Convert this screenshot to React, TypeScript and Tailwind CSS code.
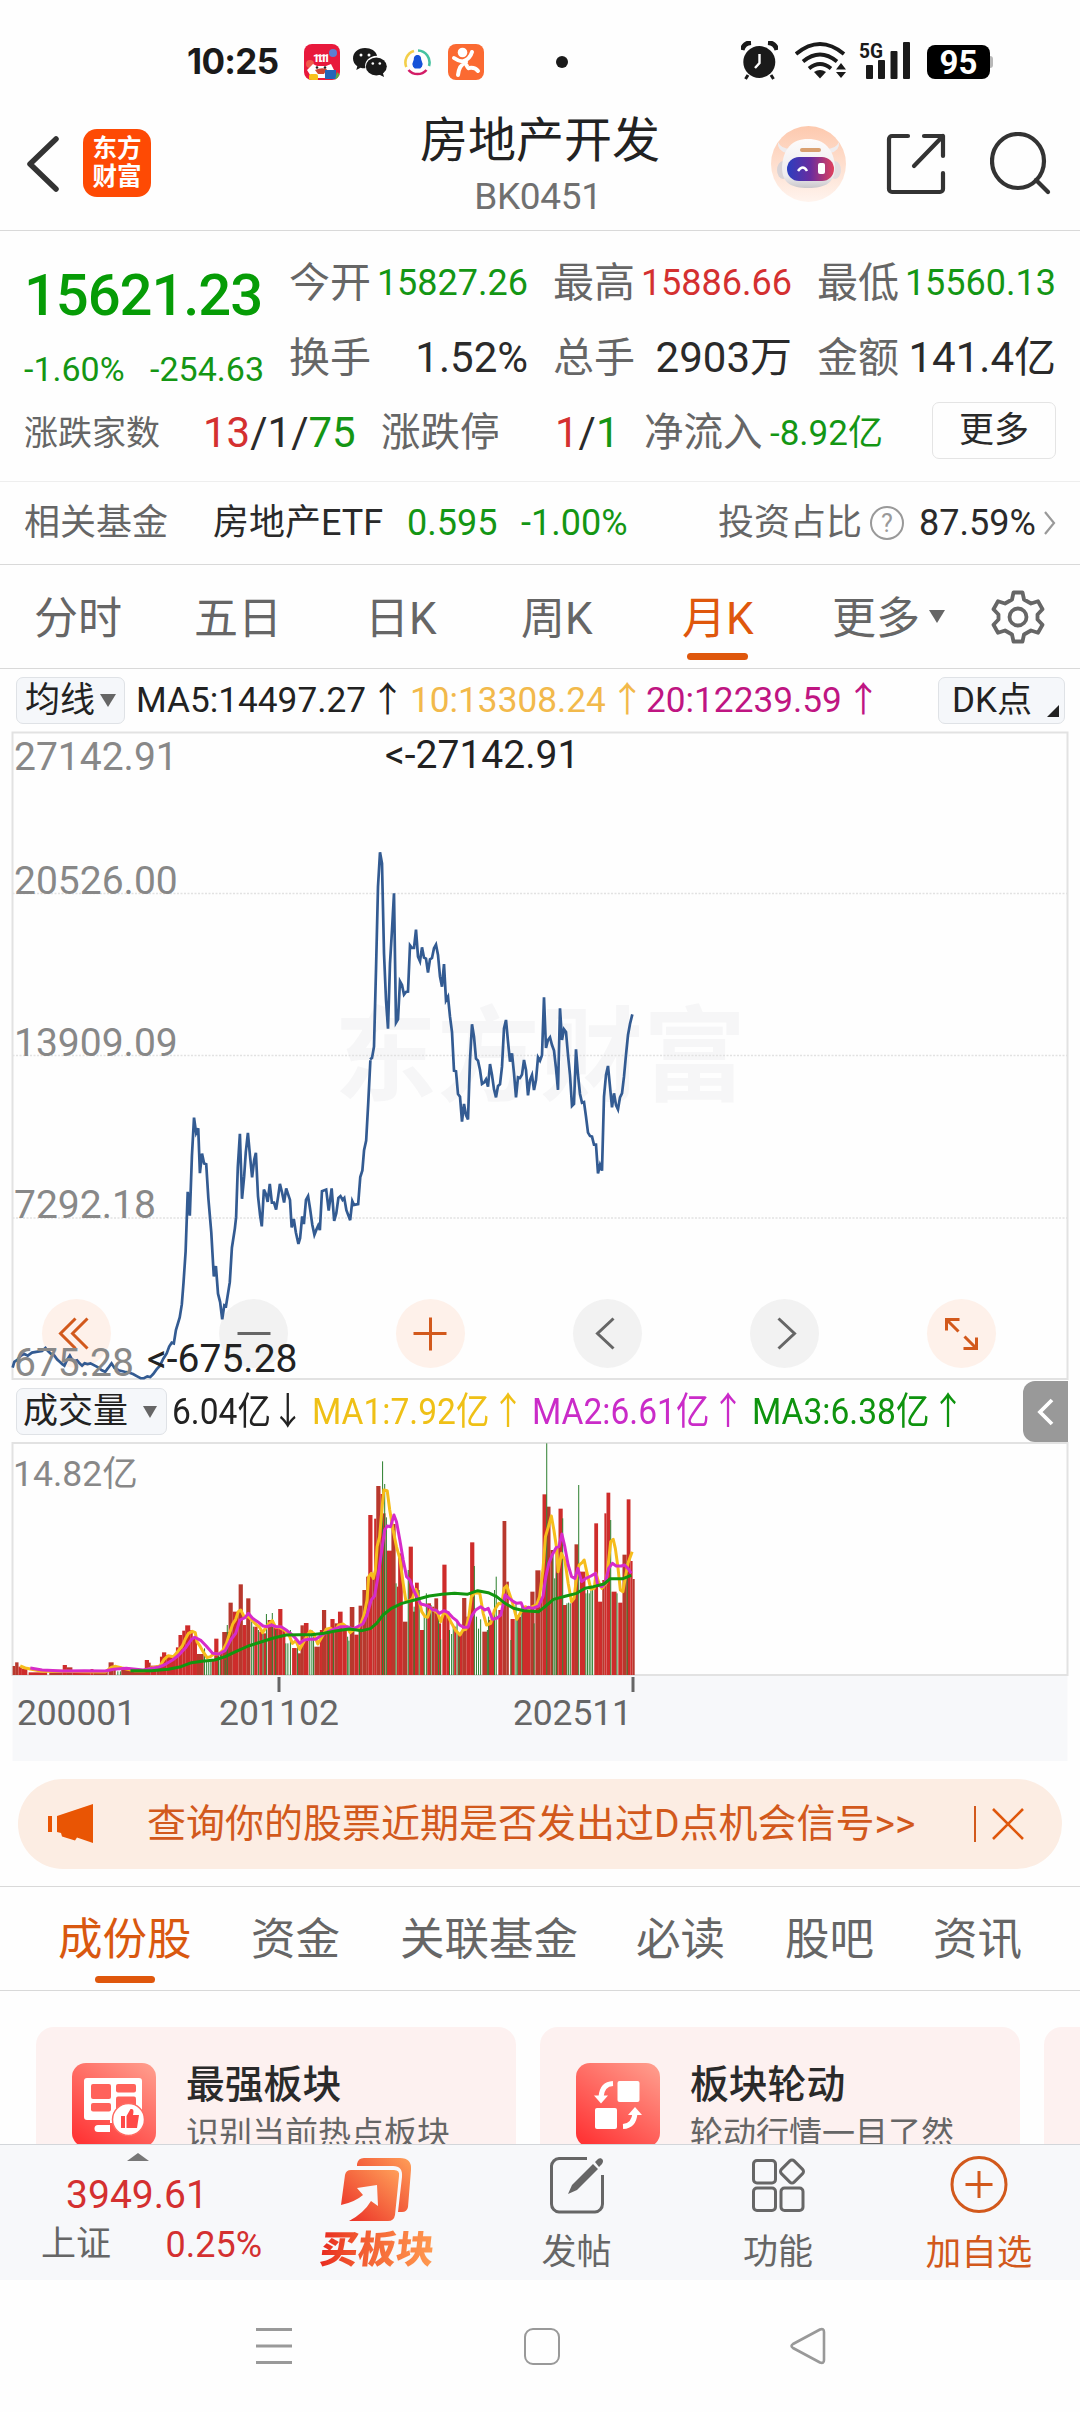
import React from "react";

type Bar = [number, number, number];

const PRICE_A =
  "30,1483 34,1468 42,1462 50,1452 57,1447 66,1452 76,1444 86,1442 100,1440 108,1432 114,1440 121,1447 128,1450 136,1462 142,1468 148,1474 153,1478 159,1464 166,1452 171,1462 177,1466 183,1464 189,1472 195,1478 201,1472 208,1474 215,1472 222,1476 232,1482 242,1490 250,1494 257,1484 265,1472 272,1484 282,1490 296,1494 306,1496 316,1500 326,1506 334,1511 342,1511 350,1506 357,1508 364,1500 372,1488 380,1478 388,1460 396,1446 402,1428 408,1418 413,1420 418,1385 427,1352 432,1318 436,1262 441,1180 446,1024 451,1086 456,930 461,830 466,870 471,858 475,975 480,924 485,950 490,952 495,1040 502,1130 508,1245 513,1218 518,1290 523,1312 528,1357 533,1320 537,1322 546,1260 551,1170 558,1120 561,1090 565,960 570,872 575,1042 580,985 584,920 589,870 594,930 599,986 604,940 608,922 613,1035 618,1085 622,1114 627,1018 632,1030 636,1050 641,1003 646,1052 651,1052 656,1070 661,1035 665,1003 670,1025 675,1052 680,1015 685,1032 689,1045 693,1117 698,1095 703,1130 709,1160 713,1145 718,1088 722,1108 727,1045 732,1035 737,1070 742,1110 747,1136 752,1122 756,1112 760,1124 765,1022 775,1018 781,1073 788,1015 794,1100 799,1080 804,1040 809,1035 814,1045 818,1040 823,1072 832,1098 837,1048 841,1058 851,1056 856,985 861,968 865,915 870,890 875,790 880,680";
const PRICE_B =
  "120,718 126,714 132,680 138,450 144,200 150,97 156,130 162,400 168,540 174,626 180,430 186,330 192,220 198,608 204,598 210,484 216,495 222,524 228,516 234,515 240,376 246,384 252,384 258,329 264,410 270,424 276,382 282,413 288,416 294,458 300,418 306,414 312,385 318,374 324,405 330,470 336,500 342,432 348,541 354,530 360,590 366,636 372,752 378,754 384,822 390,830 396,905 402,852 408,885 414,898 420,720 426,613 432,650 438,716 444,722 450,750 456,792 462,788 468,778 474,800 480,732 486,765 492,808 498,832 504,798 510,793 516,740 522,625 528,600 534,665 540,725 546,700 552,760 558,832 564,772 570,774 576,764 582,720 588,750 594,826 600,780 606,765 612,810 618,780 624,712 630,722 636,706 642,532 648,684 654,660 660,652 666,675 672,692 678,745 684,810 690,565 696,660 702,628 708,636 714,705 720,765 726,858 732,852 738,688 744,765 750,822 756,848 762,846 768,890 774,938 780,948 786,950 792,974 798,974 804,1060 810,1035 816,1052 822,830 828,765 834,738 840,800 846,862 852,820 858,855 864,868 870,832 876,820 882,770 888,705 894,645 900,612 907,583";

const RED: Bar[] = [
  [30, 36, 708], [36, 44, 697], [44, 52, 710], [52, 65, 716], [68, 112, 727], [117, 149, 727], [149, 159, 705], [159, 172, 712], [172, 215, 729], [215, 222, 717], [222, 256, 726], [258, 270, 697], [270, 275, 705], [288, 345, 718], [344, 354, 690], [354, 358, 698], [358, 372, 707], [372, 380, 705], [380, 386, 680], [385, 395, 667], [395, 418, 675], [418, 424, 652], [424, 433, 615], [433, 440, 602], [440, 452, 586], [452, 458, 600], [458, 468, 620], [468, 484, 672], [503, 509, 690], [509, 519, 626], [523, 528, 670], [528, 544, 606], [543, 553, 518], [553, 567, 545], [567, 577, 463], [577, 585, 585], [585, 595, 505], [604, 612, 590], [616, 624, 605], [626, 632, 610], [636, 650, 570], [650, 661, 592], [661, 671, 537], [671, 678, 600], [694, 705, 654], [708, 715, 670], [714, 722, 586], [722, 733, 579], [747, 760, 650], [760, 765, 600], [765, 775, 540], [775, 785, 600], [785, 795, 567], [795, 803, 580], [803, 814, 545], [814, 824, 595], [831, 842, 531], [842, 852, 614], [852, 861, 527], [861, 870, 480], [870, 875, 440], [875, 885, 255], [885, 889, 440], [889, 894, 266], [894, 904, 168], [904, 910, 192], [910, 916, 250], [919, 932, 362], [930, 940, 282], [943, 947, 470], [946, 957, 370], [957, 968, 575], [971, 981, 350], [981, 986, 545], [986, 995, 458], [998, 1008, 600], [1015, 1024, 520], [1026, 1032, 530], [1032, 1041, 505], [1043, 1048, 580], [1051, 1061, 404], [1061, 1068, 545], [1079, 1084, 590], [1088, 1098, 612], [1098, 1108, 504], [1108, 1117, 560], [1117, 1127, 337], [1146, 1158, 605], [1160, 1176, 570], [1184, 1194, 540], [1194, 1203, 273], [1203, 1209, 455], [1213, 1223, 567], [1230, 1238, 560], [1240, 1260, 540], [1260, 1270, 485], [1272, 1284, 421], [1284, 1289, 500], [1289, 1299, 193], [1299, 1308, 230], [1308, 1314, 360], [1320, 1327, 348], [1327, 1337, 236], [1337, 1347, 525], [1358, 1366, 510], [1365, 1374, 343], [1378, 1391, 425], [1412, 1421, 280], [1421, 1431, 515], [1431, 1436, 450], [1436, 1441, 250], [1441, 1450, 188], [1453, 1465, 485], [1469, 1479, 518], [1479, 1489, 374], [1489, 1498, 208], [1498, 1503, 393], [1503, 1508, 447],
];

const GREEN: [number, number][] = [
  [280, 724], [286, 724], [486, 655], [491, 690], [496, 690], [501, 688], [519, 670], [523, 668], [535, 690], [540, 585], [598, 575], [602, 590], [614, 600], [625, 600], [633, 552], [647, 549], [655, 600], [679, 640], [684, 640], [690, 600], [707, 650], [736, 610], [741, 600], [745, 612], [780, 610], [792, 600], [826, 620], [829, 632], [854, 600], [909, 94], [914, 162], [918, 262], [941, 460], [970, 420], [984, 530], [996, 480], [1008, 560], [1013, 490], [1024, 525], [1042, 550], [1047, 628], [1068, 600], [1073, 612], [1077, 590], [1086, 570], [1091, 620], [1127, 408], [1132, 560], [1137, 596], [1142, 568], [1158, 600], [1161, 560], [1175, 480], [1179, 440], [1214, 630], [1226, 520], [1229, 568], [1240, 520], [1269, 580], [1299, 40], [1314, 360], [1318, 445], [1322, 430], [1337, 265], [1347, 520], [1351, 518], [1355, 520], [1375, 165], [1392, 490], [1396, 480], [1400, 490], [1404, 482], [1408, 480], [1451, 270], [1466, 490], [1490, 395],
];

const MA1 =
  "48,708 60,714 75,718 100,724 150,724 200,725 250,726 265,712 275,709 290,714 320,722 345,722 360,714 380,708 390,688 400,677 412,680 420,668 433,648 440,628 448,610 457,604 464,608 468,635 476,650 484,668 492,683 500,680 508,672 520,672 530,660 538,640 546,608 553,582 560,568 566,545 572,540 580,560 590,560 598,570 607,582 616,590 624,608 632,592 640,580 647,572 655,592 663,592 675,600 685,610 695,640 703,632 712,658 720,640 728,620 737,603 745,610 755,642 765,620 775,598 785,595 795,602 805,585 815,582 823,590 832,608 842,597 850,598 857,582 865,555 872,510 876,440 882,430 887,445 892,420 896,350 902,320 908,230 912,180 920,182 926,240 934,300 942,350 950,385 958,460 964,510 972,515 980,505 988,478 994,500 1002,545 1010,560 1016,562 1024,535 1032,542 1040,550 1047,575 1055,545 1063,555 1073,580 1083,602 1093,615 1100,600 1107,598 1114,560 1120,500 1128,488 1140,490 1148,550 1156,585 1166,580 1175,540 1185,520 1192,522 1198,475 1204,467 1210,490 1218,520 1228,568 1238,545 1248,530 1256,535 1265,530 1275,525 1282,500 1290,420 1296,320 1303,290 1310,258 1316,300 1322,350 1326,425 1334,370 1342,390 1350,460 1358,515 1364,505 1370,440 1376,405 1383,398 1388,390 1394,425 1404,478 1412,475 1416,430 1422,455 1430,475 1440,460 1445,405 1451,335 1457,328 1462,355 1468,410 1474,480 1480,485 1486,440 1492,400 1502,365";
const MA2 =
  "72,714 100,720 150,723 200,722 250,723 270,718 300,715 340,720 375,712 390,705 410,690 425,675 440,655 455,628 463,622 478,632 490,648 505,670 520,672 535,662 548,630 560,610 570,570 582,563 590,550 600,565 612,575 625,588 635,590 645,585 655,590 668,590 680,600 690,610 700,622 712,640 722,630 735,628 750,628 765,615 780,605 795,597 810,590 825,590 838,597 850,590 862,582 872,555 882,510 890,498 898,440 906,370 914,300 920,288 928,290 936,255 942,275 950,330 958,390 966,440 974,450 982,478 990,500 1000,522 1010,525 1020,530 1028,540 1036,540 1044,550 1055,542 1065,548 1075,562 1085,572 1092,585 1102,592 1112,592 1120,560 1130,540 1142,530 1152,540 1160,535 1170,568 1180,565 1190,555 1200,495 1210,505 1220,515 1228,520 1238,518 1245,540 1255,532 1265,535 1280,528 1290,500 1297,440 1304,400 1312,375 1322,352 1328,350 1335,312 1342,350 1350,405 1358,440 1366,445 1373,415 1382,455 1392,445 1404,438 1415,430 1420,465 1430,470 1438,460 1446,415 1455,400 1464,408 1476,408 1484,405 1492,415 1500,430";
const MA3 =
  "310,722 360,722 400,718 430,710 455,698 480,694 510,690 535,680 560,665 590,648 620,636 650,624 680,615 710,614 740,614 770,610 800,602 830,597 860,602 880,596 895,580 910,555 930,535 955,520 985,510 1020,498 1050,493 1080,490 1110,493 1135,482 1160,488 1180,500 1200,520 1220,535 1245,542 1280,545 1295,530 1315,508 1345,498 1370,490 1390,475 1410,470 1435,462 1450,446 1480,446 1500,436";

function StatusBar() {
  return (
    <div className="flex h-[100px] shrink-0 items-start pt-[41px] text-[#1a1a1a]">
      <span className="ml-[187px] mt-px w-[100px] font-['Inter'] text-[35px] leading-[38px] font-bold tracking-[-0.700px]">10:25</span>
      <svg className="ml-[17px] mt-[3px]" width="36" height="36" viewBox="0 0 36 36">
        <defs>
          <clipPath id="shop"><rect width="36" height="36" rx="8" /></clipPath>
        </defs>
        <g clipPath="url(#shop)">
          <rect width="36" height="36" fill="#e8193c" />
          <circle cx="29" cy="9" r="4" fill="#5b7fd0" />
          <circle cx="6" cy="20" r="4" fill="#ef5a4c" />
          <path d="M3 26l6-6 4 2h9l5-2 3 6-4 8H8z" fill="#fff" />
          <path d="M11 26q6-3 12-1l-3 5h-6z" fill="#c43" />
          <circle cx="13" cy="23.500" r="1.300" fill="#222" /><circle cx="21" cy="23.500" r="1.300" fill="#222" />
          <rect x="5" y="30" width="9" height="7" rx="2" fill="#f8c11c" />
          <rect x="21" y="26" width="11" height="9" fill="#2465b8" />
          <path d="M33 28l3 3v5h-5z" fill="#57b04a" />
          <text x="9" y="18" fontSize="11" fontWeight="900" fill="#fff" fontFamily="Roboto" textLength="17">11.11</text>
        </g>
      </svg>
      <svg className="ml-[13px] mt-[7px]" width="34" height="30" viewBox="0 0 34 30">
        <path d="M12 0C5 0 0 4.700 0 10.400c0 3.300 1.700 6 4.300 7.900L3.300 22l4.200-2.300c1.500.4 3 .6 4.900.5-1.500-6 3-12.200 11.700-12.400C23 3 18 0 12 0z" fill="#1a1a1a" />
        <ellipse cx="23.300" cy="18.500" rx="10.500" ry="8.900" fill="#1a1a1a" /><path d="M25 26l6 3-1.200-4.500z" fill="#1a1a1a" />
        <g fill="#fff"><circle cx="8" cy="7" r="1.500" /><circle cx="16" cy="7" r="1.500" /><circle cx="19.800" cy="15.500" r="1.300" /><circle cx="26.800" cy="15.500" r="1.300" /></g>
      </svg>
      <svg className="ml-[17px] mt-[8px]" width="27" height="27" viewBox="0 0 27 27">
        <g fill="none" strokeWidth="2.600">
          <path d="M2.300 18A12 12 0 0 1 10 2" stroke="#f3cf4a" /><path d="M14 1.500A12 12 0 0 1 25 17" stroke="#45c2a0" /><path d="M22.500 21A12 12 0 0 1 4.500 21" stroke="#d31c66" />
        </g>
        <path d="M13.500 6c-2.800 0-3.700 2.300-3.700 4.500L8.300 15l.8 2.800 1.700 1.700h5.400l1.700-1.700.8-2.800-1.500-4.500c0-2.200-.9-4.500-3.700-4.500z" fill="#1552d8" />
      </svg>
      <svg className="ml-[17px] mt-[3px]" width="36" height="36" viewBox="0 0 36 36">
        <rect width="36" height="36" rx="8" fill="#fb6a32" />
        <circle cx="14.500" cy="8.500" r="4.800" fill="#fff" />
        <path d="M6 14q4 3 9 3.500Q22 15 24 8M10 31q1-10 8-13M17 18q3 7 4 6 6-1 9 3" stroke="#fff" strokeWidth="4" fill="none" strokeLinecap="round" />
      </svg>
      <div className="ml-[72px] mt-[15px] h-3 w-3 rounded-full bg-[#1a1a1a]" />
      <svg className="ml-[173px]" width="37" height="39" viewBox="0 0 37 39">
        <circle cx="18.300" cy="21" r="16" fill="#1a1a1a" />
        <path d="M7 34l-2.500 4M30 34l2.500 4" stroke="#1a1a1a" strokeWidth="3" />
        <path d="M1 9A10 10 0 0 1 10 1.500M36 9A10 10 0 0 0 27 1.500" stroke="#1a1a1a" strokeWidth="5" fill="none" />
        <path d="M18.500 13v9l-4.500 5" stroke="#fff" strokeWidth="2.400" fill="none" />
      </svg>
      <svg className="ml-[17px] mt-px" width="52" height="37" viewBox="0 0 52 37">
        <g fill="none" stroke="#1a1a1a" strokeWidth="3.800">
          <path d="M1 12q24-20 48 0" /><path d="M8 19.500q17-14 34 0" /><path d="M14 26.500q11-9 22 0" />
        </g>
        <path d="M19 30q6-4 12 0l-6 6.500z" fill="#1a1a1a" />
        <path d="M46 21l5 6.500H41zM46 36l5-6H41z" fill="#1a1a1a" />
      </svg>
      <svg className="ml-[12px] overflow-visible" width="54" height="39" viewBox="0 0 54 39">
        <text x="0" y="17" fontSize="21" fontWeight="700" fill="#1a1a1a" fontFamily="Roboto" textLength="24" lengthAdjust="spacingAndGlyphs">5G</text>
        <g fill="#1a1a1a"><rect x="7" y="24" width="7" height="14" rx="1" /><rect x="19" y="19" width="7" height="19" rx="1" /><rect x="31.500" y="10" width="7" height="28" rx="1" /><rect x="44" y="1" width="7" height="37" rx="1" /></g>
      </svg>
      <div className="ml-[14px] mt-[4px] flex h-[34px] w-[63px] items-center justify-center rounded-[8px] bg-black text-[33px] leading-none font-bold text-white">95</div>
      <div className="mt-[15px] h-[12px] w-[3px] rounded-r bg-[#b8b8b8]" />
    </div>
  );
}

function Header() {
  return (
    <div className="flex h-[131px] shrink-0 items-start border-b-[1.500px] border-[#d9d9d9]">
      <svg className="ml-[26px] mt-[35px]" width="34" height="58" viewBox="0 0 34 58">
        <path d="M30 4L4 29l26 25" fill="none" stroke="#333" strokeWidth="5.500" strokeLinecap="round" strokeLinejoin="round" />
      </svg>
      <div className="ml-[23px] mt-[29px] flex h-[68px] w-[68px] flex-col items-center justify-center rounded-[14px] bg-[#fe4a04] text-[24.500px] leading-[28px] font-bold text-white">
        <span>东方</span><span>财富</span>
      </div>
      <div className="ml-[239px] flex w-[300px] flex-col items-center">
        <div className="mt-[13px] text-[48px] leading-[56px] text-[#222]">房地产开发</div>
        <div className="mt-[9px] mr-[4px] text-[37px] leading-[38px] tracking-[-0.300px] text-[#707070]">BK0451</div>
      </div>
      <svg className="ml-[80px] mt-[25px]" width="77" height="78" viewBox="0 0 77 78">
        <defs>
          <linearGradient id="halo" x1="0" y1="0" x2="0" y2="1"><stop offset="0" stopColor="#fdc9ae" /><stop offset="1" stopColor="#fff4ee" /></linearGradient>
          <linearGradient id="visor" x1="0" x2="1"><stop offset="0" stopColor="#2a3fc0" /><stop offset="0.500" stopColor="#6a2c9e" /><stop offset="1" stopColor="#e0405c" /></linearGradient>
          <linearGradient id="shell" x1="0" y1="0" x2="0" y2="1"><stop offset="0" stopColor="#fdfbfb" /><stop offset="0.750" stopColor="#eeecee" /><stop offset="1" stopColor="#c9c7cb" /></linearGradient>
        </defs>
        <ellipse cx="38.500" cy="39" rx="37.500" ry="38" fill="url(#halo)" />
        <path d="M17 28q-10-2-9-11 3 7 13 7zM60 28q10-2 9-11-3 7-13 7z" fill="#efecee" />
        <ellipse cx="13" cy="45" rx="6" ry="9" fill="#d9d3d6" /><ellipse cx="65" cy="45" rx="6" ry="9" fill="#e3dcde" />
        <path d="M38 14c16 0 26 10 27 28 0 16-10 21-27 21S12 58 12 42c1-18 10-28 26-28z" fill="url(#shell)" />
        <rect x="30" y="23" width="21" height="4" rx="2" fill="#d9a070" />
        <rect x="17" y="32" width="47" height="24" rx="12" fill="url(#visor)" />
        <path d="M28 46q5-7 9 0" stroke="#fff" strokeWidth="2.500" fill="none" /><rect x="48" y="38" width="7" height="11" rx="2" fill="#fff" />
      </svg>
      <svg className="ml-[39px] mt-[33px]" width="60" height="62" viewBox="0 0 60 62">
        <path d="M22 3H6a3 3 0 0 0-3 3v50a3 3 0 0 0 3 3h48a3 3 0 0 0 3-3V40M38 3h19v20M57 3L28 33" fill="none" stroke="#333" strokeWidth="4.200" strokeLinecap="round" strokeLinejoin="round" />
      </svg>
      <svg className="ml-[44px] mt-[32px]" width="62" height="64" viewBox="0 0 62 64">
        <ellipse cx="28" cy="29" rx="26" ry="27" fill="none" stroke="#333" strokeWidth="4.200" />
        <path d="M46 48l12 12" stroke="#333" strokeWidth="4.200" strokeLinecap="round" />
      </svg>
    </div>
  );
}

function Stat({ label, value, cls }: { label: string; value: string; cls: string }) {
  return (
    <div className="flex w-[239px] items-center justify-between">
      <span className="text-[41px] text-[#666]">{label}</span>
      <span className={cls}>{value}</span>
    </div>
  );
}

function Quote() {
  const small = "text-[36px]";
  return (
    <div className="h-[251px] shrink-0 border-b-[1.500px] border-[#eee] whitespace-nowrap leading-none">
      <div className="flex h-[161px]">
        <div className="ml-[24px] w-[240px]">
          <div className="mt-[34px] text-[58px] leading-[60px] font-medium tracking-[-1.100px] text-[#069c06]">15621.23</div>
          <div className="mt-[25px] flex justify-between text-[34px] leading-[38px] text-[#149614]"><span>-1.60%</span><span>-254.63</span></div>
        </div>
        <div className="ml-[25px] mt-[20px] flex flex-col gap-[11px]">
          <div className="flex h-[64px] items-center gap-[25px]">
            <Stat label="今开" value="15827.26" cls={small + " text-[#149614]"} />
            <Stat label="最高" value="15886.66" cls={small + " text-[#d43030]"} />
            <Stat label="最低" value="15560.13" cls={small + " text-[#149614]"} />
          </div>
          <div className="flex h-[64px] items-center gap-[25px]">
            <Stat label="换手" value="1.52%" cls="text-[42px] text-[#2a2a2a]" />
            <Stat label="总手" value="2903万" cls="text-[42px] text-[#2a2a2a]" />
            <Stat label="金额" value="141.4亿" cls="text-[42px] text-[#2a2a2a]" />
          </div>
        </div>
      </div>
      <div className="flex h-[82px] items-center pl-[24px]">
        <span className="w-[179px] text-[34px] text-[#666]">涨跌家数</span>
        <span className="w-[178px] text-[42px] text-[#2a2a2a]"><b className="font-normal text-[#d43030]">13</b>/1/<b className="font-normal text-[#149614]">75</b></span>
        <span className="w-[174px] text-[39.500px] text-[#666]">涨跌停</span>
        <span className="w-[89px] text-[42px] text-[#2a2a2a]"><b className="font-normal text-[#d43030]">1</b>/<b className="font-normal text-[#149614]">1</b></span>
        <span className="w-[126px] text-[39.500px] text-[#666]">净流入</span>
        <span className="w-[162px] text-[35px] text-[#149614]">-8.92亿</span>
        <span className="relative -top-[3px] flex h-[57px] w-[124px] items-center justify-center rounded-[7px] border-[1.500px] border-[#e4e4e4] text-[35px] text-[#2a2a2a]">更多</span>
      </div>
    </div>
  );
}

function FundRow() {
  return (
    <div className="flex h-[83px] shrink-0 items-center border-b-[1.500px] border-[#d9d9d9] pl-[24px] text-[36px] leading-none whitespace-nowrap">
      <span className="w-[189px] text-[#666]">相关基金</span>
      <span className="w-[194px] text-[#2a2a2a]">房地产ETF</span>
      <span className="w-[114px] text-[#149614]">0.595</span>
      <span className="w-[197px] text-[#149614]">-1.00%</span>
      <span className="w-[152px] text-[#666]">投资占比</span>
      <span className="flex h-[34px] w-[34px] items-center justify-center rounded-full border-[2.500px] border-[#999] text-[25px] text-[#999]">?</span>
      <span className="ml-[15px] w-[123px] text-[#2a2a2a]">87.59%</span>
      <svg width="16" height="28" viewBox="0 0 16 28"><path d="M3 3l9 11-9 11" fill="none" stroke="#999" strokeWidth="2.200" /></svg>
    </div>
  );
}

function PeriodTabs() {
  return (
    <div className="flex h-[104px] shrink-0 items-center border-b-[1.500px] border-[#d9d9d9] pl-[34px] text-[44px] leading-none whitespace-nowrap text-[#666]">
      <span className="mt-[4px] w-[160px]">分时</span>
      <span className="mt-[4px] w-[171px]">五日</span>
      <span className="mt-[4px] w-[156px]">日K</span>
      <span className="mt-[4px] w-[161px]">周K</span>
      <span className="relative mt-[4px] w-[150px] text-[#df570c]">月K<i className="absolute top-[56px] left-[5px] h-[7px] w-[61px] rounded-full bg-[#df570c]" /></span>
      <span className="mt-[4px] w-[97px]">更多</span>
      <span className="h-0 w-0 border-x-[8px] border-t-[13px] border-x-transparent border-t-[#666]" />
      <svg className="ml-[46px]" width="54" height="54" viewBox="0 0 54 54">
        <path d="M22.500 2.500h9l1.500 7 7 4 7-2.300 4.500 8-5 5.300v5l5 5.300-4.500 8-7-2.300-7 4-1.500 7h-9l-1.500-7-7-4-7 2.300-4.500-8 5-5.300v-5l-5-5.300 4.500-8 7 2.300 7-4z" fill="none" stroke="#666" strokeWidth="3.800" strokeLinejoin="round" />
        <circle cx="27" cy="27" r="8.500" fill="none" stroke="#666" strokeWidth="3.800" />
      </svg>
    </div>
  );
}

function MaRow() {
  const arrow = "ml-[4px]";
  return (
    <div className="flex h-[62px] shrink-0 items-center pt-px pl-[16px] text-[35px] leading-none whitespace-nowrap">
      <span className="flex h-[47px] w-[109px] items-center rounded-[7px] border-[1.500px] border-[#dfe2e6] bg-[#f5f7fa] pl-[8px] text-[#222]">均线<i className="ml-[5px] h-0 w-0 border-x-[8px] border-t-[13px] border-x-transparent border-t-[#666]" /></span>
      <span className="ml-[11px] w-[274px] pt-px text-[35.200px] text-[#222]">MA5:14497.27<span className={arrow}>↑</span></span>
      <span className="w-[236px] pt-px text-[35.200px] text-[#f2b94b]">10:13308.24<span className={arrow}>↑</span></span>
      <span className="w-[292px] pt-px text-[35.200px] text-[#bf1582]">20:12239.59<span className={arrow}>↑</span></span>
      <span className="relative flex h-[47px] w-[127px] items-center rounded-[7px] border-[1.500px] border-[#dfe2e6] bg-[#f5f7fa] pl-[13px] text-[#222]">DK点<i className="absolute right-[5px] bottom-[6px] h-0 w-0 border-b-[12px] border-l-[12px] border-b-[#222] border-l-transparent" /></span>
    </div>
  );
}

const circles = [
  { x: 76.5, warm: true, d: "M-1 -15l-15 15 15 15M11 -15l-15 15 15 15" },
  { x: 253.5, warm: false, d: "M-16 0h33" },
  { x: 430.5, warm: true, d: "M-17 0h33M0 -16v33" },
  { x: 607.5, warm: false, d: "M6 -15l-16 15 16 15" },
  { x: 784.5, warm: false, d: "M-6 -15l16 15-16 15" },
  { x: 961.5, warm: true, d: "M-15 -3v-11h13M-14 -13L-3 -2M15 4v11h-13M14 14L3 3" },
];

function PriceChart() {
  return (
    <svg className="block shrink-0 overflow-visible" width="1080" height="650" viewBox="0 731 1080 650" fontFamily="Roboto, 'Noto Sans CJK SC', sans-serif" fontSize="39">
      <text x="334" y="1093" fontSize="103" fontWeight="700" fill="#f6f6f7">东方财富</text>
      <path d="M12.500 893.500H1067M12.500 1055.500H1067M12.500 1218H1067" stroke="#e2e2e2" strokeWidth="1.500" strokeDasharray="2 1.500" />
      <path d="M12.500 732.500H1067.500V1379H12.500Z" fill="none" stroke="#e2e2e2" strokeWidth="2" />
      {circles.map((c) => (
        <circle key={c.x} cx={c.x} cy="1333.500" r="34.500" fill={c.warm ? "#fef1ea" : "#f2f2f2"} />
      ))}
      <g fill="none" stroke="#335b92" strokeWidth="2.700">
        <polyline points={PRICE_A} transform="translate(0 800) scale(.42088 .3827)" vectorEffect="non-scaling-stroke" />
        <polyline points={PRICE_B} transform="translate(330 820) scale(.33333)" vectorEffect="non-scaling-stroke" />
      </g>
      {circles.map((c) => (
        <path key={c.x} d={c.d} transform={`translate(${c.x} 1333.5)`} fill="none" stroke={c.warm ? "#d2591c" : "#666"} strokeWidth="3" />
      ))}
      <g fill="#888">
        <text x="14" y="770">27142.91</text>
        <text x="14" y="894">20526.00</text>
        <text x="14" y="1056">13909.09</text>
        <text x="14" y="1218">7292.18</text>
        <text x="14" y="1376">675.28</text>
      </g>
      <text x="385" y="768" fill="#222">&lt;-27142.91</text>
      <text x="147" y="1371.500" fill="#222">&lt;-675.28</text>
    </svg>
  );
}

function VolumeHeader() {
  const item = "h-full origin-left scale-x-[0.895] text-[37.500px] leading-[61px]";
  const arrow = "ml-[2px]";
  return (
    <div className="flex h-[61px] shrink-0 items-center pl-[16px] leading-none whitespace-nowrap">
      <span className="flex h-[47px] w-[151px] shrink-0 items-center rounded-[7px] border-[1.500px] border-[#dfe2e6] bg-[#f5f7fa] pl-[6px] text-[35px] text-[#222]">成交量<i className="ml-[15px] h-0 w-0 border-x-[7px] border-t-[12px] border-x-transparent border-t-[#666]" /></span>
      <span className="ml-[5px] w-[140px] shrink-0"><span className={item + " block w-[157px] text-[#222]"}>6.04亿↓</span></span>
      <span className="w-[220px] shrink-0"><span className={item + " block w-[248px] text-[#efc016]"}>MA1:7.92亿<span className={arrow}>↑</span></span></span>
      <span className="w-[220px] shrink-0"><span className={item + " block w-[248px] text-[#ca2bc8]"}>MA2:6.61亿<span className={arrow}>↑</span></span></span>
      <span className="w-[271px] shrink-0"><span className={item + " block w-[248px] text-[#0e930e]"}>MA3:6.38亿<span className={arrow}>↑</span></span></span>
      <span className="flex h-[61px] w-[45px] shrink-0 items-center justify-center rounded-l-[12px] bg-[#999]">
        <svg width="18" height="28" viewBox="0 0 18 28"><path d="M15 2L3 14l12 12" fill="none" stroke="#fff" strokeWidth="3.800" /></svg>
      </span>
    </div>
  );
}

function VolumeChart() {
  return (
    <svg className="block shrink-0" width="1080" height="319" viewBox="0 1442 1080 319" fontFamily="Roboto, 'Noto Sans CJK SC', sans-serif">
      <path d="M12.500 1443H1067.500V1675H12.500Z" fill="none" stroke="#e2e2e2" strokeWidth="2" />
      <rect x="12.500" y="1676" width="1055" height="85" fill="#f7f8fa" />
      <text x="13" y="1486" fontSize="35.500" fill="#888">14.82亿</text>
      <g transform="translate(0 1430) scale(.42088 .33333)">
        {RED.map(([a, b, t]) => <rect key={a} x={a} y={t} width={b - a} height={735 - t} fill={a % 3 === 0 ? "#b8382d" : "#ce2c2b"} />)}
        {GREEN.map(([x, t]) => <rect key={x} x={x - 1.2} y={t} width="2.400" height={735 - t} fill="#2e8030" />)}
        <g fill="none" strokeLinejoin="round">
          <polyline points={MA1} stroke="#f6bd1c" strokeWidth="3" vectorEffect="non-scaling-stroke" />
          <polyline points={MA2} stroke="#d62bc9" strokeWidth="3" vectorEffect="non-scaling-stroke" />
          <polyline points={MA3} stroke="#12960f" strokeWidth="3" vectorEffect="non-scaling-stroke" />
        </g>
      </g>
      <path d="M279 1677v15M633 1677v15" stroke="#666" strokeWidth="3" />
      <g fill="#666" fontSize="35.500">
        <text x="17" y="1725" textLength="119">200001</text>
        <text x="219" y="1725" textLength="120">201102</text>
        <text x="513" y="1725" textLength="119">202511</text>
      </g>
    </svg>
  );
}

function Banner() {
  return (
    <div className="mx-[18px] mt-[18px] flex h-[90px] shrink-0 items-center rounded-full bg-[#fcede3] pl-[29px] leading-none whitespace-nowrap">
      <svg width="48" height="42" viewBox="0 0 48 42"><path d="M10 13L46 1v39L30 34.500l-2 3-13-4-1-3.500-4-1zM1 13h4v16H1z" fill="#e95504" /></svg>
      <span className="ml-[52px] w-[827px] text-[39px] text-[#d2591c]">查询你的股票近期是否发出过D点机会信号&gt;&gt;</span>
      <i className="h-[36px] w-[1.500px] bg-[#d2591c]" />
      <svg className="ml-[15px]" width="34" height="34" viewBox="0 0 34 34"><path d="M2 2l30 30M32 2L2 32" stroke="#df570c" strokeWidth="2.600" /></svg>
    </div>
  );
}

function SectionTabs() {
  return (
    <div className="mt-[17px] flex h-[105px] shrink-0 items-center border-y-[1.500px] border-[#d9d9d9] pl-[58px] text-[44.500px] leading-none whitespace-nowrap text-[#666]">
      <span className="relative mt-[4px] w-[193px] text-[#d9580f]">成份股<i className="absolute top-[58px] left-[37px] h-[7px] w-[60px] rounded-full bg-[#df570c]" /></span>
      <span className="mt-[4px] w-[149px]">资金</span>
      <span className="mt-[4px] w-[236px]">关联基金</span>
      <span className="mt-[4px] w-[149px]">必读</span>
      <span className="mt-[4px] w-[148px]">股吧</span>
      <span className="mt-[4px]">资讯</span>
    </div>
  );
}

function CardGradient({ id }: { id: string }) {
  return (
    <defs><linearGradient id={id} x1="0.200" y1="1" x2="0.900" y2="0"><stop offset="0" stopColor="#ff3536" /><stop offset="1" stopColor="#ff9c8c" /></linearGradient></defs>
  );
}

function Cards() {
  return (
    <div className="flex h-[153px] shrink-0 gap-[24px] overflow-hidden pt-[36px] pl-[36px] leading-none whitespace-nowrap">
      <div className="flex h-[160px] w-[480px] shrink-0 rounded-[18px] bg-[#fdf1f0]">
        <svg className="mt-[36px] ml-[36px]" width="84" height="84" viewBox="0 0 84 84">
          <CardGradient id="cardA" />
          <rect width="84" height="84" rx="14" fill="url(#cardA)" />
          <path d="M15 15h52a3 3 0 0 1 3 3v37H40v5h-2v9H26a3.500 3.500 0 0 1 0-7h12v-5H15a3 3 0 0 1-3-3V18a3 3 0 0 1 3-3z" fill="#fff" />
          <g fill="#ff625b"><rect x="19" y="21" width="20" height="15" rx="2" /><rect x="44" y="21" width="20" height="8.500" rx="2" /><rect x="19" y="40" width="20" height="8.500" rx="2" /><rect x="44" y="33.500" width="20" height="15" rx="2" /></g>
          <circle cx="56.500" cy="56.500" r="16" fill="#fff" stroke="#ff6a62" strokeWidth="1.500" />
          <path d="M49 53h4v12h-4zM54.500 53l4-7c3-.5 3.500 1.500 2.500 6h6l-2 13H54.500z" fill="#ff4a48" />
        </svg>
        <div className="ml-[30px] mt-[38px]"><div className="text-[38.800px] leading-[40px] font-medium text-[#2a2a2a]">最强板块</div><div className="mt-[10px] text-[33px] leading-[38px] text-[#666]">识别当前热点板块</div></div>
      </div>
      <div className="flex h-[160px] w-[480px] shrink-0 rounded-[18px] bg-[#fdf1f0]">
        <svg className="mt-[36px] ml-[36px]" width="84" height="84" viewBox="0 0 84 84">
          <CardGradient id="cardB" />
          <rect width="84" height="84" rx="14" fill="url(#cardB)" />
          <rect x="41.500" y="18" width="22" height="21" rx="2" fill="#fff" /><rect x="19" y="45" width="22" height="21" rx="2" fill="#fff" />
          <path d="M37 20.500Q26 21 25 34M47 63.500Q58 63 59 50" fill="none" stroke="#fff" strokeWidth="5" />
          <path d="M18 32.500h14l-7 8zM52 52h14l-7-8z" fill="#fff" />
        </svg>
        <div className="ml-[30px] mt-[38px]"><div className="text-[38.800px] leading-[40px] font-medium text-[#2a2a2a]">板块轮动</div><div className="mt-[10px] text-[33px] leading-[38px] text-[#666]">轮动行情一目了然</div></div>
      </div>
      <div className="h-[160px] w-[480px] shrink-0 rounded-[18px] bg-[#fdf1f0]" />
    </div>
  );
}

function BottomBar() {
  return (
    <div className="flex h-[136px] shrink-0 items-start border-t-[1.500px] border-[#d3d6da] bg-[#f7f8fa] leading-none whitespace-nowrap text-[#666]">
      <div className="flex w-[276px] flex-col items-center pt-[8px]">
        <i className="h-0 w-0 border-x-[11px] border-b-[8px] border-x-transparent border-b-[#777]" />
        <span className="mt-[14px] mr-[2px] text-[39px] leading-[40px] text-[#d43030]">3949.61</span>
        <div className="mt-[10px] ml-[27px] flex w-[223px] items-center justify-between pl-px leading-[40px]"><span className="text-[35px]">上证</span><span className="mr-px text-[36px] text-[#d43030]">0.25%</span></div>
      </div>
      <div className="flex w-[202px] flex-col items-center pt-[11px]">
        <svg width="72" height="67" viewBox="0 0 72 67">
          <defs><linearGradient id="buy" x1="0" y1="1" x2="1" y2="0"><stop offset="0" stopColor="#ea2a24" /><stop offset="1" stopColor="#ffa059" /></linearGradient></defs>
          <path d="M16 8q1-6 7-6h36q12 0 11 12l-3 37q-1 5-6 5h-4l4-35q1-11-9-11H16z" fill="url(#buy)" />
          <path d="M4 19q1-5 6-5h43q6 0 5 6l-4 39q-1 6-7 6H8q15-8 22-20l7 5-1-21-20 3 6 7Q14 46 0 49z" fill="url(#buy)" />
        </svg>
        <span className="mt-[6px] -skew-x-6 bg-gradient-to-r from-[#e8281f] to-[#ff9a50] bg-clip-text text-[38px] leading-[42px] font-black text-transparent">买板块</span>
      </div>
      <div className="flex w-[197px] flex-col items-center pt-[11px]">
        <svg width="56" height="58" viewBox="0 0 56 58">
          <path d="M38 2.500H10A8 8 0 0 0 2.500 10v38a8 8 0 0 0 7.500 8h36a8 8 0 0 0 7.500-8V19" fill="none" stroke="#666" strokeWidth="3" />
          <path d="M19 38l4-9 21-21 5 5-21 21zM46 6l3-3c3-2 7 1 4 5l-3 3z" fill="#666" />
        </svg>
        <span className="mt-[18px] text-[35px] leading-[42px]">发帖</span>
      </div>
      <div className="flex w-[206px] flex-col items-center pt-[11px]">
        <svg width="56" height="58" viewBox="0 0 56 58" fill="none" stroke="#666" strokeWidth="3">
          <rect x="3.500" y="4.500" width="22" height="22.500" rx="3.500" /><rect x="3.500" y="32" width="22" height="22.500" rx="3.500" /><rect x="31" y="32" width="22" height="22.500" rx="3.500" />
          <rect x="33" y="6.500" width="18" height="18" rx="3" transform="rotate(45 42 15.500)" />
        </svg>
        <span className="mt-[18px] text-[35px] leading-[42px]">功能</span>
      </div>
      <div className="flex w-[196px] flex-col items-center pt-[11px] text-[#d2591c]">
        <svg width="58" height="58" viewBox="0 0 58 58" fill="none" stroke="#d2591c" strokeWidth="3"><circle cx="29" cy="28.500" r="27" /><path d="M15.500 28.500h27M29 15v27" /></svg>
        <span className="mt-[18px] text-[35.500px] leading-[42px]">加自选</span>
      </div>
    </div>
  );
}

function NavBar() {
  return (
    <div className="flex h-[133px] shrink-0 items-start pt-[46px]">
      <svg className="ml-[256px]" width="36" height="40" viewBox="0 0 36 40"><path d="M0 3.500h36M0 20h36M0 36.500h36" stroke="#999" strokeWidth="3" /></svg>
      <span className="ml-[232px] mt-[2px] h-[37px] w-[36px] rounded-[9px] border-[2.500px] border-[#999]" />
      <svg className="ml-[229px]" width="38" height="40" viewBox="0 0 38 40"><path d="M31 3.500Q35 2 35 6v28q0 4-4 2.500L4 22q-3-2 0-4z" fill="none" stroke="#999" strokeWidth="2.600" strokeLinejoin="round" /></svg>
    </div>
  );
}

export default function App() {
  return (
    <div className="flex h-[2412px] w-[1080px] flex-col overflow-hidden bg-[#fefefe] font-['Roboto','Noto_Sans_CJK_SC',sans-serif]">
      <StatusBar />
      <Header />
      <Quote />
      <FundRow />
      <PeriodTabs />
      <MaRow />
      <PriceChart />
      <VolumeHeader />
      <VolumeChart />
      <Banner />
      <SectionTabs />
      <Cards />
      <BottomBar />
      <NavBar />
    </div>
  );
}
